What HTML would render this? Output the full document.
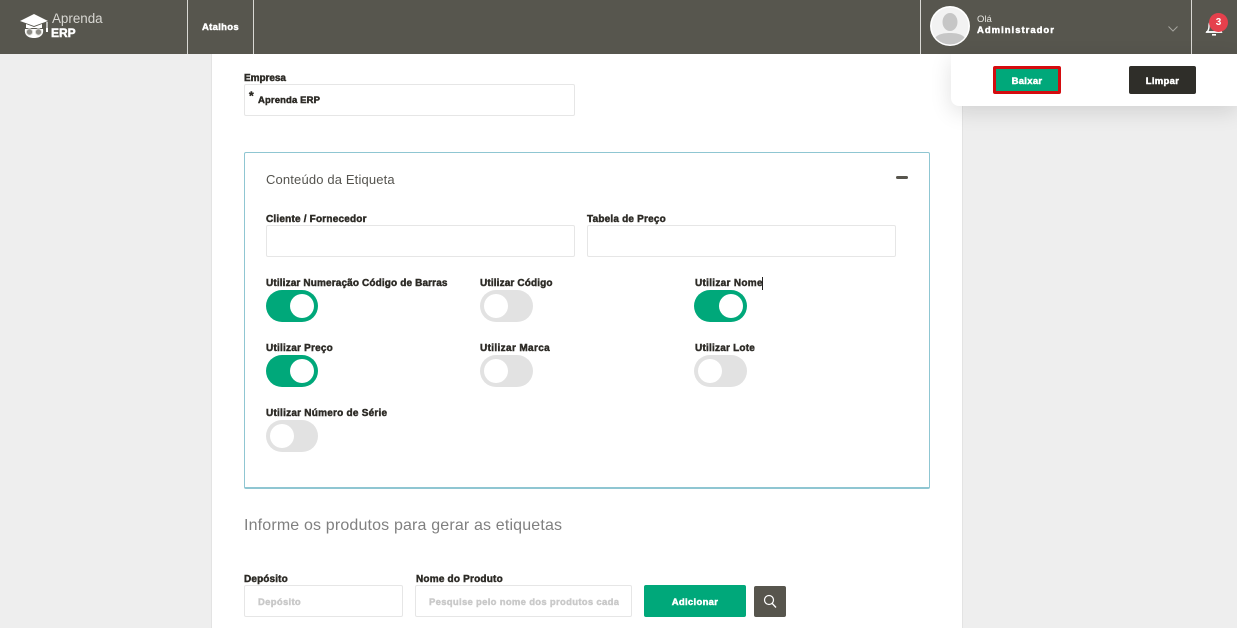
<!DOCTYPE html>
<html lang="pt-BR">
<head>
<meta charset="utf-8">
<title>Etiquetas</title>
<style>
html,body{margin:0;padding:0;width:1237px;height:628px;overflow:hidden;background:#eeeeee;font-family:"Liberation Sans",sans-serif}
*{box-sizing:border-box}
.a{position:absolute}
.t{position:absolute;white-space:nowrap;font-weight:700;font-size:10px;line-height:12px;color:#2d2b26;-webkit-text-stroke:.45px currentColor;letter-spacing:.2px}
.w{color:#fff}
.in{position:absolute;background:#fff;border:1px solid #e6e6e6;border-radius:2px}
.sw{position:absolute;width:53px;height:32px;border-radius:16px;background:#e2e2e2}
.sw i{position:absolute;top:4px;left:4px;width:24px;height:24px;border-radius:50%;background:#fff}
.sw.on{background:#00a87a}
.sw.on i{left:25px}
.sw.n{width:52px}
.sw.n.on i{left:24px}
.l{position:absolute;white-space:nowrap;color:#555;font-weight:400}
.v{position:absolute;top:0;width:1px;height:54px;background:#d9d8d4}
</style>
</head>
<body>
<!-- content panel -->
<div class="a" style="left:211px;top:54px;width:752px;height:574px;background:#fff;border-left:1px solid #e3e3e3;border-right:1px solid #e3e3e3"></div>

<!-- header -->
<div class="a" style="left:0;top:0;width:1237px;height:54px;background:#57564e"></div>
<svg class="a" style="left:19px;top:12px" width="32" height="28" viewBox="0 0 32 28">
<path d="M1 9 L15 2 L29 9 L15 14 Z" fill="#fff"/>
<path d="M7 12 L15 15 L23 12 L23 16 L7 16 Z" fill="#fff"/>
<path d="M28 10 V16" stroke="#fff" stroke-width="1.2"/>
<rect x="27" y="16" width="2" height="4" fill="#fff"/>
<path d="M6 17 C5 23 9 26 15 26 C21 26 25 23 24 17 Z" fill="#fff"/>
<circle cx="10.5" cy="20" r="3.2" fill="#8d8c86" stroke="#e6e6e2" stroke-width="1"/>
<circle cx="19.5" cy="20" r="3.2" fill="#8d8c86" stroke="#e6e6e2" stroke-width="1"/>
</svg>
<div class="l" style="left:52px;top:11px;font-size:13.4px;line-height:16px;color:#d8d7d2">Aprenda</div>
<div class="t w" style="left:51px;top:26px;font-size:12px;line-height:14px;letter-spacing:0">ERP</div>
<div class="v" style="left:187px"></div>
<div class="v" style="left:253px"></div>
<div class="t w" style="left:202px;top:22px;font-size:9.5px;letter-spacing:.3px">Atalhos</div>
<div class="v" style="left:920px"></div>
<div class="v" style="left:1191px"></div>
<svg class="a" style="left:930px;top:6px" width="40" height="40" viewBox="0 0 40 40">
<circle cx="20" cy="20" r="20" fill="#fff"/>
<clipPath id="c"><circle cx="20" cy="20" r="18.5"/></clipPath>
<g clip-path="url(#c)"><circle cx="20" cy="20" r="18.5" fill="#f2f2f2"/>
<ellipse cx="20" cy="16" rx="7.5" ry="9" fill="#c6c6c6"/>
<path d="M2 40 C3 29 11 27 20 27 C29 27 37 29 38 40 Z" fill="#c6c6c6"/></g>
</svg>
<div class="l" style="left:977px;top:14px;font-size:9.5px;line-height:12px;color:#e6e5e0">Olá</div>
<div class="t w" style="left:977px;top:25px;font-size:9.5px;letter-spacing:1px">Administrador</div>
<svg class="a" style="left:1167px;top:25px" width="12" height="8" viewBox="0 0 12 8"><path d="M1.5 1.5 L6 6 L10.5 1.5" fill="none" stroke="#a5a49e" stroke-width="1"/></svg>
<svg class="a" style="left:1205px;top:18px" width="20" height="20" viewBox="0 0 20 20">
<path d="M2 14 C4 12 4 10 4 8 C4 4 6 2 9 2 C12 2 14 4 14 8 C14 10 14 12 16 14 Z" fill="none" stroke="#fff" stroke-width="1.4"/>
<rect x="1" y="13.2" width="16" height="1.6" fill="#fff"/>
<rect x="7" y="16" width="4" height="1.6" fill="#fff"/>
</svg>
<div class="a" style="left:1209px;top:13px;width:19px;height:19px;border-radius:50%;background:#e5404c;color:#fff;font-weight:700;font-size:10px;line-height:19px;text-align:center">3</div>

<!-- dropdown actions -->
<div class="a" style="left:951px;top:54px;width:286px;height:52px;background:#fff;border-radius:0 0 0 8px;box-shadow:0 6px 22px rgba(0,0,0,.12)"></div>
<div class="a" style="left:993px;top:66px;width:68px;height:28px;background:#00a87a;border:3px solid #d40c10;border-radius:2px"></div>
<div class="t w" style="left:993px;top:76px;width:68px;text-align:center;font-size:9.5px;letter-spacing:.3px">Baixar</div>
<div class="a" style="left:1129px;top:66px;width:67px;height:28px;background:#2f2e29;border-radius:2px"></div>
<div class="t w" style="left:1129px;top:76px;width:67px;text-align:center;font-size:9.5px;letter-spacing:.3px">Limpar</div>

<!-- empresa -->
<div class="t" style="left:244px;top:73px;letter-spacing:-.05px">Empresa</div>
<div class="in" style="left:244px;top:84px;width:331px;height:32px"></div>
<div class="t" style="left:249px;top:90px;font-size:12px">*</div>
<div class="t" style="left:258px;top:95px;font-size:9.5px;letter-spacing:.12px">Aprenda ERP</div>

<!-- card -->
<div class="a" style="left:244px;top:152px;width:686px;height:337px;background:#fff;border:1px solid #8fc6d2;border-bottom-width:2px;border-radius:2px"></div>
<div class="l" style="left:266px;top:172px;font-size:13px;line-height:16px;color:#55544f;letter-spacing:.15px">Conteúdo da Etiqueta</div>
<div class="a" style="left:896px;top:176px;width:12px;height:3px;border-radius:2px;background:#57554d"></div>

<div class="t" style="left:266px;top:214px">Cliente / Fornecedor</div>
<div class="in" style="left:266px;top:225px;width:309px;height:32px"></div>
<div class="t" style="left:587px;top:214px">Tabela de Preço</div>
<div class="in" style="left:587px;top:225px;width:309px;height:32px"></div>

<div class="t" style="left:266px;top:278px;letter-spacing:.14px">Utilizar Numeração Código de Barras</div>
<div class="sw n on" style="left:266px;top:290px"><i></i></div>
<div class="t" style="left:480px;top:278px;letter-spacing:.14px">Utilizar Código</div>
<div class="sw" style="left:480px;top:290px"><i></i></div>
<div class="t" style="left:695px;top:278px;letter-spacing:.3px">Utilizar Nome</div>
<div class="a" style="left:762px;top:277px;width:1px;height:13px;background:#222"></div>
<div class="sw on" style="left:694px;top:290px"><i></i></div>

<div class="t" style="left:266px;top:343px;letter-spacing:.22px">Utilizar Preço</div>
<div class="sw n on" style="left:266px;top:355px"><i></i></div>
<div class="t" style="left:480px;top:343px;letter-spacing:.36px">Utilizar Marca</div>
<div class="sw" style="left:480px;top:355px"><i></i></div>
<div class="t" style="left:695px;top:343px;letter-spacing:.22px">Utilizar Lote</div>
<div class="sw" style="left:694px;top:355px"><i></i></div>

<div class="t" style="left:266px;top:408px;letter-spacing:.24px">Utilizar Número de Série</div>
<div class="sw n" style="left:266px;top:420px"><i></i></div>

<!-- produtos -->
<div class="l" style="left:244px;top:516px;font-size:16px;line-height:20px;color:#808080;letter-spacing:.16px">Informe os produtos para gerar as etiquetas</div>
<div class="t" style="left:244px;top:574px;letter-spacing:.14px">Depósito</div>
<div class="in" style="left:244px;top:585px;width:159px;height:32px"></div>
<div class="t" style="left:258px;top:597px;font-size:9.5px;letter-spacing:.3px;color:#c9c9c9">Depósito</div>
<div class="t" style="left:416px;top:574px">Nome do Produto</div>
<div class="in" style="left:415px;top:585px;width:217px;height:32px"></div>
<div class="t" style="left:429px;top:597px;width:190px;overflow:hidden;font-size:9.5px;letter-spacing:.3px;color:#c9c9c9">Pesquise pelo nome dos produtos cada</div>
<div class="a" style="left:644px;top:585px;width:102px;height:32px;background:#00a87a;border-radius:2px"></div>
<div class="t w" style="left:644px;top:597px;width:102px;text-align:center;font-size:9.5px;letter-spacing:.3px">Adicionar</div>
<div class="a" style="left:754px;top:586px;width:32px;height:31px;background:#57554d;border-radius:2px"></div>
<svg class="a" style="left:763px;top:594px" width="14" height="15" viewBox="0 0 14 15"><circle cx="6" cy="6" r="4.5" fill="none" stroke="#fff" stroke-width="1.2"/><path d="M9.3 9.5 L13 13.5" stroke="#fff" stroke-width="1.3"/></svg>
</body>
</html>
